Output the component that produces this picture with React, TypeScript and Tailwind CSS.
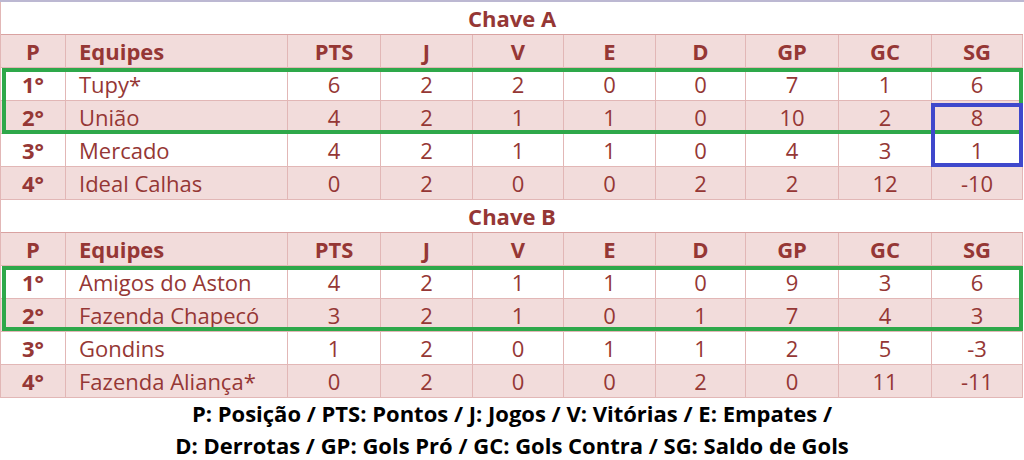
import React from "react";

const COLS =
  "grid grid-cols-[65px_222px_93px_92px_91px_92px_90px_93px_93px_91px]";

type Row = (string | number)[];

const groupA: Row[] = [
  ["1°", "Tupy*", 6, 2, 2, 0, 0, 7, 1, 6],
  ["2°", "União", 4, 2, 1, 1, 0, 10, 2, 8],
  ["3°", "Mercado", 4, 2, 1, 1, 0, 4, 3, 1],
  ["4°", "Ideal Calhas", 0, 2, 0, 0, 2, 2, 12, -10],
];

const groupB: Row[] = [
  ["1°", "Amigos do Aston", 4, 2, 1, 1, 0, 9, 3, 6],
  ["2°", "Fazenda Chapecó", 3, 2, 1, 0, 1, 7, 4, 3],
  ["3°", "Gondins", 1, 2, 0, 1, 1, 2, 5, -3],
  ["4°", "Fazenda Aliança*", 0, 2, 0, 0, 2, 0, 11, -11],
];

const headers = ["P", "Equipes", "PTS", "J", "V", "E", "D", "GP", "GC", "SG"];

function Cells({ row, bold }: { row: Row; bold?: boolean }) {
  return (
    <>
      {row.map((v, i) => (
        <div
          key={i}
          className={
            "flex items-center border-r border-[#e2b7b6] " +
            (i === 1 ? "justify-start pl-[13px] " : "justify-center ") +
            (bold || i === 0 ? "font-bold" : "")
          }
        >
          {v}
        </div>
      ))}
    </>
  );
}

function Group({ title, rows }: { title: string; rows: Row[] }) {
  return (
    <>
      <div className="h-[33px] flex items-center justify-center font-bold bg-white border-b border-[#d9a2a1]">
        {title}
      </div>
      <div className={COLS + " h-[33px] bg-[#f2dcdb] border-b border-[#e2b7b6]"}>
        <Cells row={headers} bold />
      </div>
      {rows.map((r, i) => (
        <div
          key={i}
          className={
            COLS +
            " h-[33px] border-b border-[#e2b7b6] " +
            (i % 2 === 0 ? "bg-white" : "bg-[#f2dcdb]")
          }
        >
          <Cells row={r} />
        </div>
      ))}
    </>
  );
}

export default function App() {
  return (
    <div
      className="w-[1024px] h-[460px] bg-white overflow-hidden text-[22px] text-[#953735] leading-none"
      style={{ fontFamily: '"Open Sans", "Noto Sans", sans-serif' }}
    >
      <div className="h-[2px] bg-[#bcb8d2]" />
      <div className="relative w-[1023px] border-l border-[#e2b7b6]">
        <Group title="Chave A" rows={groupA} />
        <Group title="Chave B" rows={groupB} />
        <div className="absolute left-[1px] top-[66px] w-[1021px] h-[66px] border-4 border-[#2ea84a]" />
        <div className="absolute left-[930px] top-[101px] w-[92px] h-[64px] border-4 border-[#3f48cc]" />
        <div className="absolute left-[1px] top-[264px] w-[1021px] h-[65px] border-4 border-[#2ea84a]" />
      </div>
      <div className="text-black font-bold text-center text-[22px]">
        <div className="leading-[30px]">
          P: Posição / PTS: Pontos / J: Jogos / V: Vitórias / E: Empates /
        </div>
        <div className="leading-[24px] mt-[5px]">
          D: Derrotas / GP: Gols Pró / GC: Gols Contra / SG: Saldo de Gols
        </div>
      </div>
    </div>
  );
}
